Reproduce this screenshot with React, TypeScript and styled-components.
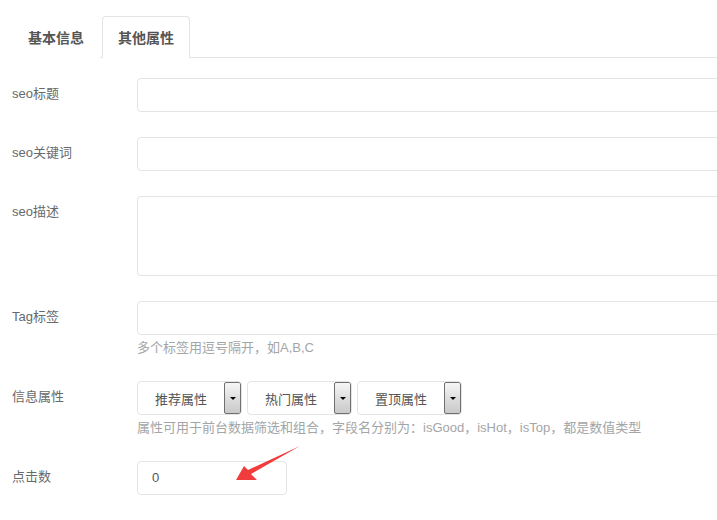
import styled, { createGlobalStyle } from 'styled-components';

const GlobalStyle = createGlobalStyle`
  html, body {
    margin: 0;
    padding: 0;
    background: #ffffff;
    overflow: hidden;
  }
  body {
    font-family: "Liberation Sans", Arial, "Noto Sans CJK SC", sans-serif;
    font-size: 13px;
    color: #676a6c;
  }
`;

const Page = styled.div`
  position: relative;
  width: 1000px;
  padding: 16px 0 0 12px;
`;

const TabBar = styled.ul`
  display: flex;
  gap: 2px;
  margin: 0;
  padding: 0;
  list-style: none;
  border-bottom: 1px solid #e2e4e6;
`;

const Tab = styled.li<{ $active?: boolean }>`
  height: 40px;
  padding: 0 15px;
  margin-bottom: -1px;
  display: flex;
  align-items: center;
  font-weight: 600;
  font-size: 14px;
  color: #555555;
  border: 1px solid ${(p) => (p.$active ? '#e2e4e6' : 'transparent')};
  border-bottom-color: ${(p) => (p.$active ? '#ffffff' : 'transparent')};
  border-radius: 4px 4px 0 0;
  background: #ffffff;
`;

const Form = styled.div`
  padding-top: 20px;
  display: flex;
  flex-direction: column;
  gap: 25px;
`;

const Row = styled.div`
  display: flex;
  align-items: flex-start;
`;

const Label = styled.label`
  width: 125px;
  flex: none;
  padding-top: 7px;
  line-height: 18px;
  font-size: 13px;
  color: #676a6c;
`;

const Field = styled.div`
  display: flex;
  flex-direction: column;
`;

const Input = styled.div<{ $width?: number }>`
  box-sizing: border-box;
  width: ${(p) => (p.$width ? `${p.$width}px` : '700px')};
  height: 34px;
  border: 1px solid #e2e4e6;
  border-radius: 4px;
  padding: 8px 14px;
  line-height: 16px;
  font-size: 13px;
  color: #555555;
`;

const TextArea = styled(Input)`
  height: 80px;
`;

const Help = styled.div`
  margin-top: 5px;
  line-height: 16px;
  font-size: 13px;
  color: #a3a5a7;
`;

const SelectGroup = styled.div`
  display: flex;
  gap: 5px;
`;

const Select = styled.div`
  box-sizing: border-box;
  width: 105px;
  height: 34px;
  display: flex;
  border: 1px solid #e2e4e6;
  border-radius: 4px;
  overflow: hidden;
`;

const SelectText = styled.span`
  flex: 1;
  display: flex;
  align-items: center;
  justify-content: center;
  font-size: 13px;
  color: #555555;
`;

const SelectButton = styled.span`
  box-sizing: border-box;
  width: 17px;
  height: 32px;
  border: 1px solid #707070;
  border-radius: 2px;
  background: linear-gradient(#f6f6f6, #dcdcdc 55%, #c9c9c9);
  display: flex;
  align-items: center;
  justify-content: center;

  &::after {
    content: '';
    border-left: 3px solid transparent;
    border-right: 3px solid transparent;
    border-top: 3px solid #000000;
    margin-top: 1px;
  }
`;

const Arrow = styled.svg`
  position: absolute;
  left: 230px;
  top: 444px;
`;

const selects = ['推荐属性', '热门属性', '置顶属性'];

export default function App() {
  return (
    <>
      <GlobalStyle />
      <Page>
        <TabBar>
          <Tab>基本信息</Tab>
          <Tab $active>其他属性</Tab>
        </TabBar>
        <Form>
          <Row>
            <Label>seo标题</Label>
            <Input />
          </Row>
          <Row>
            <Label>seo关键词</Label>
            <Input />
          </Row>
          <Row>
            <Label>seo描述</Label>
            <TextArea />
          </Row>
          <Row>
            <Label>Tag标签</Label>
            <Field>
              <Input />
              <Help>多个标签用逗号隔开，如A,B,C</Help>
            </Field>
          </Row>
          <Row>
            <Label>信息属性</Label>
            <Field>
              <SelectGroup>
                {selects.map((s) => (
                  <Select key={s}>
                    <SelectText>{s}</SelectText>
                    <SelectButton />
                  </Select>
                ))}
              </SelectGroup>
              <Help>属性可用于前台数据筛选和组合，字段名分别为：isGood，isHot，isTop，都是数值类型</Help>
            </Field>
          </Row>
          <Row>
            <Label>点击数</Label>
            <Input $width={150}>0</Input>
          </Row>
        </Form>
        <Arrow width="75" height="42" viewBox="0 0 75 42">
          <polygon
            points="6,36 14,22 18,26 70,2 21,30 27,36"
            fill="#f03c3c"
          />
        </Arrow>
      </Page>
    </>
  );
}
